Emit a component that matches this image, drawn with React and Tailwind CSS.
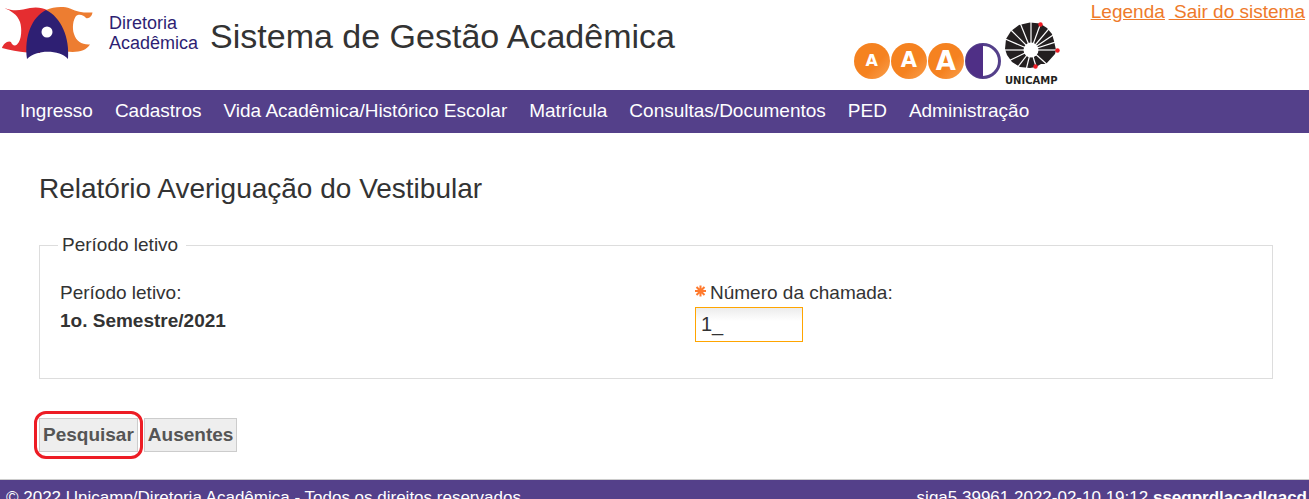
import { useState } from 'react';

const MENU = [
  'Ingresso',
  'Cadastros',
  'Vida Acadêmica/Histórico Escolar',
  'Matrícula',
  'Consultas/Documentos',
  'PED',
  'Administração',
];

const FONT_SIZES = [
  { label: 'Diminuir fonte', className: 'text-base' },
  { label: 'Fonte normal', className: 'text-[21px]' },
  { label: 'Aumentar fonte', className: 'text-[26px]' },
];

// Angles (in degrees, clockwise from the right) of the white rays in the emblem
const RAYS = [-180, -157, -135, -112, -90, -70, -50, -34, -18, 0, 42, 73, 104, 128, 154];

function DacLogo() {
  return (
    <svg viewBox="1 6 92 54" className="h-[54px] w-[92px]" aria-hidden="true">
      <path d="M4.500 8C14 12 22 10 30 8C37 6.500 43 8 47 10L40 53L27 52.500C18 52 10 50 2 48C3 44 8 40 11 42C12 45.500 15 46.500 17 44.500C22 40 22 28 20 22C17 14 11 11 4.500 8Z" fill="#e52d30" />
      <path d="M46 10C53 7 63 6 70 8.500C78 12 84 13 92.500 12.500C92 16 89 19 86 18C84 15 79 13.500 76 16C73 20 72 28 74 34C76 41 82 45 90 44.500C86 51 77 53 66 51.500Z" fill="#ed7d31" />
      <path d="M46 10C61 17 70 38 68 59C60 50 37 49 27 59C24 36 32 17 46 10Z" fill="#2e1f73" />
      <circle cx="47" cy="32" r="5.500" fill="#fff" />
    </svg>
  );
}

function UnicampLogo() {
  return (
    <svg viewBox="0 0 56 64" className="h-16 w-14" role="img" aria-label="Unicamp">
      <path d="M25 0.500L35 1.500L42 6L47 12L49 19L51 28L50 32L41 42L36 42L31 45L25 46L15 45L7 40L2 33L0 27L1 17L6 9L14 3Z" fill="#231f20" />
      {RAYS.map((angle) => (
        <path key={angle} d="M26 28H54" stroke="#fff" strokeWidth="1.200" transform={`rotate(${angle} 26 28)`} />
      ))}
      <circle cx="26" cy="28" r="7.500" fill="#fff" />
      <circle cx="35.500" cy="2.500" r="2.200" fill="#ed1c24" />
      <circle cx="52.500" cy="28.500" r="2.200" fill="#ed1c24" />
      <circle cx="30.500" cy="44.500" r="2.200" fill="#ed1c24" />
      <text x="0" y="62" fontFamily="DejaVu Sans, sans-serif" fontWeight="700" fontSize="10" fill="#231f20">
        UNICAMP
      </text>
    </svg>
  );
}

function RequiredMark() {
  return (
    <svg viewBox="0 0 12 12" className="-mt-1 h-3 w-3" aria-hidden="true">
      <path d="M5.500 0.500V11.500M0 6H11M1.500 2L9.500 10M9.500 2L1.500 10" stroke="#ff7a2e" strokeWidth="2" />
    </svg>
  );
}

function Header() {
  return (
    <header className="flex h-[90px] shrink-0 justify-between">
      <div className="flex items-start pl-px pt-0.5">
        <div className="flex items-center gap-4 pt-1">
          <DacLogo />
          <p className="text-lg leading-5 text-[#2e1f73]">
            Diretoria
            <br />
            Acadêmica
          </p>
        </div>
        <p className="pl-3 pt-3.5 text-[34px] leading-10">Sistema de Gestão Acadêmica</p>
      </div>

      <div className="flex items-start">
        <div className="flex items-center pr-1 pt-[43px]">
          {FONT_SIZES.map((size) => (
            <button
              key={size.label}
              type="button"
              aria-label={size.label}
              className={`mr-px flex h-9 w-9 items-center justify-center rounded-full bg-linear-to-br from-[#f58220] from-60% to-[#f9a04a] font-['DejaVu_Sans',sans-serif] font-bold text-white ${size.className}`}
            >
              A
            </button>
          ))}
          <button type="button" aria-label="Alto contraste">
            <svg viewBox="0 0 36 36" className="h-9 w-9" aria-hidden="true">
              <circle cx="18" cy="18" r="16.500" fill="#fff" stroke="#54408a" strokeWidth="3" />
              <path d="M18 1A17 17 0 0 0 18 35Z" fill="#4f2f86" />
            </svg>
          </button>
        </div>
        <div className="pt-[22px]">
          <UnicampLogo />
        </div>
        <div className="pl-[30px] pr-1 text-[19px] leading-6 text-[#ee7a2b] underline">
          <a href="#legenda">Legenda</a>
          <a href="#sair" className="ml-1 whitespace-pre"> Sair do sistema</a>
        </div>
      </div>
    </header>
  );
}

export default function App() {
  const [chamada, setChamada] = useState('1_');

  return (
    <div className="flex h-screen flex-col overflow-hidden bg-white font-['Liberation_Sans',Arial,sans-serif] text-[19px] text-[#333]">
      <Header />

      <nav className="flex h-[43px] shrink-0 items-center gap-[22px] bg-[#54408a] px-5 text-white">
        {MENU.map((item) => (
          <a key={item} href="#menu">{item}</a>
        ))}
      </nav>

      <main className="shrink-0 px-9 pt-9">
        <form onSubmit={(e) => e.preventDefault()}>
          <div className="pl-[3px]">
            <h1 className="text-[28px] leading-10">Relatório Averiguação do Vestibular</h1>

            <fieldset className="mt-6 border border-[#ddd] px-5 pb-9">
              <legend className="-ml-0.5 pl-1 pr-2 leading-6">Período letivo</legend>
              <div className="grid grid-cols-[635px_1fr] pt-[22px]">
                <div className="leading-7">
                  <p>Período letivo:</p>
                  <p className="font-bold">1o. Semestre/2021</p>
                </div>
                <div>
                  <label htmlFor="chamada" className="flex items-center gap-[3px] leading-7">
                    <RequiredMark />
                    Número da chamada:
                  </label>
                  <input
                    id="chamada"
                    value={chamada}
                    onChange={(e) => setChamada(e.target.value)}
                    className="block h-[35px] w-[108px] border border-[#ffa500] bg-linear-to-b from-[#ececec] to-white to-40% px-[5px] text-xl outline-none"
                  />
                </div>
              </div>
            </fieldset>
          </div>

          {/* Actions */}
          <div className="mt-8 flex items-center gap-px">
            <div className="-ml-0.5 rounded-xl border-3 border-[#ed1c24] px-0.5 py-1">
              <button type="submit" className="block h-[34px] border border-[#ccc] bg-[#eee] px-[3px] font-bold text-[#555]">
                Pesquisar
              </button>
            </div>
            <button type="button" className="h-[34px] border border-[#ccc] bg-[#eee] px-[3px] font-bold text-[#555]">
              Ausentes
            </button>
          </div>
        </form>
      </main>

      <footer className="mt-5 flex shrink-0 justify-between border-t border-[#ccc] bg-[#54408a] py-2 pl-1.5 pr-0.5 text-[17px] leading-5 text-white">
        <p>© 2022 Unicamp/Diretoria Acadêmica - Todos os direitos reservados.</p>
        <p>
          siga5 39961 2022-02-10 19:12 <b>ssegprd|acad|gacd</b>
        </p>
      </footer>
    </div>
  );
}
